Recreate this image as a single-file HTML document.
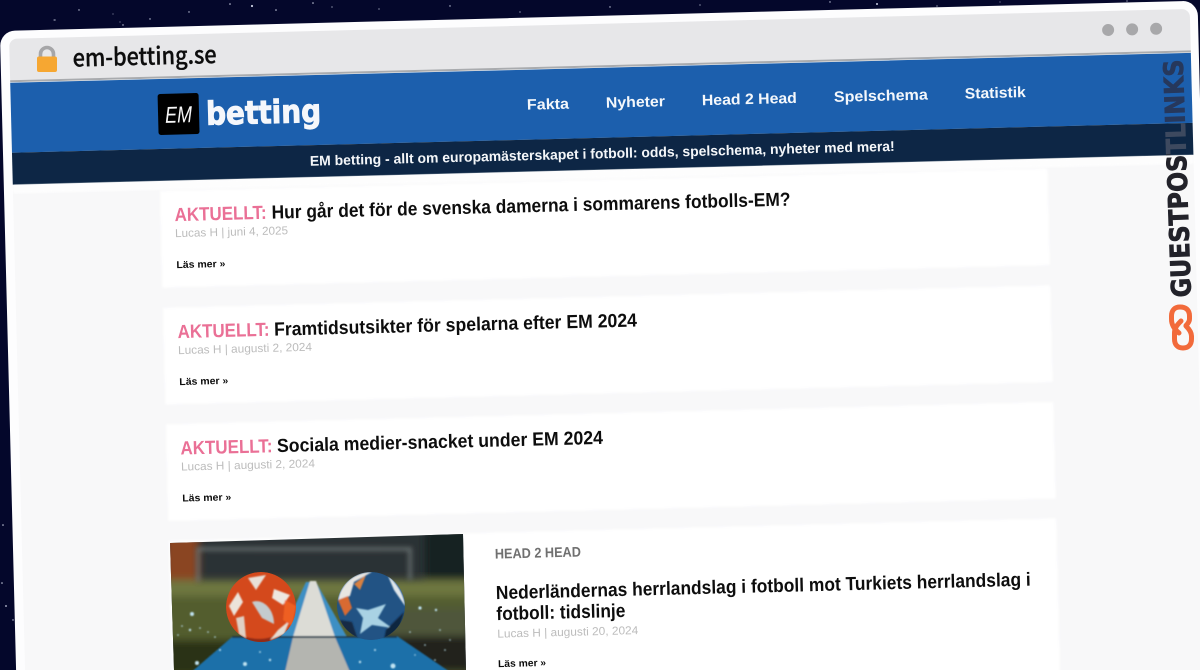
<!DOCTYPE html>
<html lang="sv">
<head>
<meta charset="utf-8">
<title>em-betting.se</title>
<style>
html,body{margin:0;padding:0;background:#04072b;width:1200px;height:670px;overflow:hidden}
svg{display:block}
.p{font-family:"Liberation Sans",sans-serif;font-weight:700}
.n{font-size:15px;fill:#f4f7fb}
.h{font-size:19px;fill:#101010}
.a{font-size:19px;fill:#ea7096}
.m{font-family:"Liberation Sans",sans-serif;font-size:11.5px;fill:#bcbcbc}
.l{font-size:10px;fill:#0a0a0a}
</style>
</head>
<body>
<svg width="1200" height="670" viewBox="0 0 1200 670" xmlns="http://www.w3.org/2000/svg">
<defs>
<filter id="soft" x="-2%" y="-2%" width="104%" height="104%"><feGaussianBlur stdDeviation="0.35"/></filter>
<filter id="b4" x="-20%" y="-20%" width="140%" height="140%"><feGaussianBlur stdDeviation="4"/></filter>
<filter id="b2" x="-20%" y="-20%" width="140%" height="140%"><feGaussianBlur stdDeviation="2.4"/></filter>
<filter id="b1" x="-20%" y="-20%" width="140%" height="140%"><feGaussianBlur stdDeviation="0.8"/></filter>
<filter id="c1" x="-2%" y="-5%" width="104%" height="110%"><feGaussianBlur stdDeviation="1"/></filter>
<clipPath id="imgc"><polygon points="170,543 463,534 466,670 174,670"/></clipPath>
<clipPath id="ball1"><circle cx="261" cy="607" r="35"/></clipPath>
<clipPath id="ball2"><circle cx="371" cy="606" r="34"/></clipPath>
<linearGradient id="gp" gradientUnits="userSpaceOnUse" x1="0" y1="0" x2="238" y2="0">
<stop offset="0" stop-color="#24242c"/><stop offset=".6" stop-color="#24242c"/>
<stop offset=".605" stop-color="#3d4a5f"/><stop offset=".73" stop-color="#3d4a5f"/>
<stop offset=".735" stop-color="#27375c"/><stop offset="1" stop-color="#27375c"/>
</linearGradient>
</defs>

<rect width="1200" height="670" fill="#04072b"/>
<g fill="#c8cde0">
<circle cx="79" cy="10" r=".7"/><circle cx="55" cy="20" r=".6"/><circle cx="123" cy="25" r=".7"/><circle cx="150" cy="19" r=".7"/>
<circle cx="189" cy="12" r=".7"/><circle cx="230" cy="4" r=".8"/><circle cx="252" cy="6" r="1.1"/><circle cx="276" cy="10" r=".8"/>
<circle cx="313" cy="3" r=".8"/><circle cx="332" cy="7" r=".6"/><circle cx="379" cy="9" r=".6"/><circle cx="450" cy="6" r=".7"/>
<circle cx="520" cy="12" r=".6"/><circle cx="610" cy="7" r=".7"/><circle cx="700" cy="5" r=".6"/><circle cx="830" cy="2" r=".7"/>
<circle cx="877" cy="4" r="1"/><circle cx="937" cy="6" r=".6"/><circle cx="1127" cy="1" r=".6"/><circle cx="3" cy="525" r=".8"/>
<circle cx="2" cy="583" r=".8"/><circle cx="6" cy="606" r=".9"/><circle cx="13" cy="620" r=".7"/><circle cx="54" cy="20" r=".5"/>
<circle cx="120" cy="22" r=".5"/><circle cx="113" cy="14" r=".5"/><circle cx="1000" cy="2" r=".5"/>
</g>

<g filter="url(#soft)">
<g transform="translate(0,35) rotate(-1.45)">
<!-- window frame -->
<rect x="0" y="-4" width="1198" height="760" rx="15" fill="#fdfdfe"/>
<path d="M9 48V12a8 8 0 0 1 8-8H1182a8 8 0 0 1 8 8V48Z" fill="#e7e7e9"/>
<rect x="9" y="45.5" width="1181" height="2" fill="#a9abae"/>
<rect x="9" y="47.5" width="1181" height="1" fill="#f5f6f7"/>
<rect x="9" y="48" width="1181" height="710" fill="#f8f8f9"/>
<rect x="9" y="48" width="1181" height="70" fill="#1a5fad"/>
<rect x="9" y="118" width="1181" height="32" fill="#0c2745"/>
<rect x="9" y="150" width="1181" height="9" fill="#ffffff" opacity=".75" filter="url(#c1)"/>

<!-- chrome -->
<circle cx="1107.9" cy="23" r="6" fill="#a8a8aa"/>
<circle cx="1131.9" cy="23" r="6" fill="#a8a8aa"/>
<circle cx="1155.9" cy="23" r="6" fill="#a8a8aa"/>
<text x="72" y="33.5" textLength="144" lengthAdjust="spacingAndGlyphs" font-family="'Noto Sans CJK JP','Liberation Sans',sans-serif" font-weight="500" font-size="24" fill="#0b0b0b" stroke="#0b0b0b" stroke-width=".3">em-betting.se</text>

<!-- header -->
<rect x="156" y="63" width="41" height="41" rx="2.5" fill="#030303"/>
<text x="163" y="92" textLength="27" lengthAdjust="spacingAndGlyphs" font-family="'Liberation Sans',sans-serif" font-style="italic" font-size="23" fill="#f7f7f7">EM</text>
<text x="204" y="95" textLength="115" lengthAdjust="spacingAndGlyphs" font-family="'DejaVu Sans',sans-serif" font-weight="700" font-size="32" fill="#f5f7fb" stroke="#f5f7fb" stroke-width="1">betting</text>

<g class="p">
<text class="n" x="525" y="88" textLength="42" lengthAdjust="spacingAndGlyphs">Fakta</text>
<text class="n" x="604" y="88" textLength="59" lengthAdjust="spacingAndGlyphs">Nyheter</text>
<text class="n" x="700" y="88" textLength="95" lengthAdjust="spacingAndGlyphs">Head 2 Head</text>
<text class="n" x="832" y="88" textLength="94" lengthAdjust="spacingAndGlyphs">Spelschema</text>
<text class="n" x="963" y="88" textLength="61" lengthAdjust="spacingAndGlyphs">Statistik</text>
<text x="306.6" y="138.5" font-size="14" fill="#f4f6f9" textLength="585" lengthAdjust="spacingAndGlyphs">EM betting - allt om europamästerskapet i fotboll: odds, spelschema, nyheter med mera!</text>
</g>

<!-- cards -->
<g filter="url(#c1)">
<rect x="156" y="160" width="887.5" height="96.5" fill="#fff"/>
<rect x="156" y="277" width="887.5" height="96.5" fill="#fff"/>
<rect x="156" y="393.5" width="887.5" height="96.5" fill="#fff"/>
<rect x="156" y="510" width="887.5" height="260" fill="#fff"/>
</g>

<g class="p">
<text class="a" x="170" y="190.5" textLength="92" lengthAdjust="spacingAndGlyphs">AKTUELLT:</text>
<text class="h" x="267" y="190.5" textLength="519" lengthAdjust="spacingAndGlyphs">Hur går det för de svenska damerna i sommarens fotbolls-EM?</text>
<text class="l" x="170.5" y="237.5" textLength="49" lengthAdjust="spacingAndGlyphs">Läs mer »</text>

<text class="a" x="170" y="307.5" textLength="92" lengthAdjust="spacingAndGlyphs">AKTUELLT:</text>
<text class="h" x="266.5" y="307.5" textLength="363" lengthAdjust="spacingAndGlyphs">Framtidsutsikter för spelarna efter EM 2024</text>
<text class="l" x="170.5" y="354.5" textLength="49" lengthAdjust="spacingAndGlyphs">Läs mer »</text>

<text class="a" x="170" y="424" textLength="92" lengthAdjust="spacingAndGlyphs">AKTUELLT:</text>
<text class="h" x="266.5" y="424" textLength="326" lengthAdjust="spacingAndGlyphs">Sociala medier-snacket under EM 2024</text>
<text class="l" x="170.5" y="471" textLength="49" lengthAdjust="spacingAndGlyphs">Läs mer »</text>

<text x="481.6" y="536" font-size="14" fill="#6f6f6f" textLength="86" lengthAdjust="spacingAndGlyphs">HEAD 2 HEAD</text>
<text class="h" x="481.6" y="576.5" textLength="535" lengthAdjust="spacingAndGlyphs">Nederländernas herrlandslag i fotboll mot Turkiets herrlandslag i</text>
<text class="h" x="481.6" y="597.5" textLength="129" lengthAdjust="spacingAndGlyphs">fotboll: tidslinje</text>
<text class="l" x="482" y="644.5" textLength="48" lengthAdjust="spacingAndGlyphs">Läs mer »</text>
</g>
<text class="m" x="170" y="206.5" textLength="113" lengthAdjust="spacingAndGlyphs">Lucas H | juni 4, 2025</text>
<text class="m" x="170" y="323.5" textLength="134" lengthAdjust="spacingAndGlyphs">Lucas H | augusti 2, 2024</text>
<text class="m" x="170" y="440" textLength="134" lengthAdjust="spacingAndGlyphs">Lucas H | augusti 2, 2024</text>
<text class="m" x="482" y="615" textLength="141" lengthAdjust="spacingAndGlyphs">Lucas H | augusti 20, 2024</text>
</g>

<!-- lock -->
<path d="M40.5 58V54a6.5 6.5 0 0 1 13 0V58" fill="none" stroke="#a6a6a8" stroke-width="3.6"/>
<rect x="37" y="56.5" width="20" height="15.5" rx="2" fill="#f6a730"/>

<!-- image -->
<g clip-path="url(#imgc)">
<rect x="165" y="530" width="305" height="145" fill="#2c3235"/>
<g filter="url(#b4)">
<rect x="165" y="530" width="34" height="50" fill="#8a4424"/>
<rect x="425" y="530" width="45" height="50" fill="#182022"/>
<rect x="165" y="582" width="305" height="95" fill="#535d2e"/>
<rect x="165" y="580" width="305" height="16" fill="#6e773f"/>
<rect x="165" y="640" width="100" height="35" fill="#2a3319"/>
<rect x="380" y="608" width="90" height="28" fill="#50563a"/>
<rect x="380" y="636" width="90" height="36" fill="#20231d"/>
</g>
<g filter="url(#b2)" fill="none" stroke="#6c7474" stroke-width="4" opacity=".8">
<path d="M198 582V549H410V580"/>
</g>
<g filter="url(#b1)">
<polygon points="306,582 316,582 347,637 280,637" fill="#3d8fc4"/>
<polygon points="232,637 397,636 450,672 188,675" fill="#1c6fa9"/>
<polygon points="310,581 316,581 335,637 293,637" fill="#dcdcd6"/>
<polygon points="293,637 335,637 350,672 285,672" fill="#b4b5b0"/>
<path d="M232 637H397" stroke="#21394a" stroke-width="1.8"/>
</g>
<g fill="#bfe3f2" filter="url(#b1)">
<circle cx="245" cy="664" r="2"/><circle cx="197" cy="663" r="2"/><circle cx="393" cy="666" r="2.5"/><circle cx="270" cy="660" r="1.2"/>
<circle cx="190" cy="630" r="1.2"/><circle cx="215" cy="637" r=".8"/><circle cx="420" cy="608" r="1.6"/><circle cx="436" cy="610" r="1.2"/>
<circle cx="192" cy="614" r="2"/><circle cx="178" cy="635" r=".8"/><circle cx="410" cy="632" r=".8"/><circle cx="440" cy="630" r=".8"/>
<circle cx="200" cy="628" r=".8"/><circle cx="208" cy="632" r=".8"/><circle cx="182" cy="626" r=".8"/><circle cx="425" cy="645" r=".8"/>
<circle cx="445" cy="650" r=".8"/><circle cx="415" cy="655" r=".7"/><circle cx="435" cy="660" r=".8"/><circle cx="450" cy="640" r=".7"/>
<circle cx="220" cy="650" r="1"/><circle cx="260" cy="652" r=".9"/><circle cx="375" cy="650" r="1"/><circle cx="360" cy="662" r="1.2"/>
</g>
<g clip-path="url(#ball1)">
<circle cx="261" cy="607" r="35" fill="#d4491c"/>
<g filter="url(#b1)">
<path d="M226 625C240 640 270 648 296 622V645H226Z" fill="#8f2a14"/>
<path d="M248 578L266 575 256 590Z" fill="#e8e0d8"/>
<path d="M229 606L238 592 243 602 234 616Z" fill="#ece3da"/>
<path d="M252 602C262 598 274 608 274 624L262 618Z" fill="#c4cbce"/>
<path d="M274 589L290 595 283 605 272 598Z" fill="#eee7e0"/>
<path d="M236 618L244 616 246 638 239 634Z" fill="#e0d0c4"/>
<path d="M278 630L290 620 284 634 270 640Z" fill="#e5dcd2"/>
<path d="M285 600L296 606 292 626 283 620Z" fill="#ee5e22"/>
</g>
</g>
<g clip-path="url(#ball2)">
<circle cx="371" cy="606" r="34" fill="#205284"/>
<g filter="url(#b1)">
<path d="M338 600C342 580 358 572 372 572L354 582 350 596Z" fill="#e8e6e2"/>
<path d="M338 600L348 596 352 608 345 616Z" fill="#d86a30"/>
<path d="M354 584L366 575 360 590Z" fill="#d9803f"/>
<path d="M368 610L386 604 378 618 392 628 372 625 360 634 363 618 356 608Z" fill="#a9d2e4"/>
<path d="M388 576C396 582 404 594 405 606L394 590Z" fill="#dfe6ea"/>
<path d="M340 620L352 622 358 640 345 632Z" fill="#152a44"/>
<path d="M386 630L404 612 398 632 384 640Z" fill="#10253f"/>
</g>
</g>
</g>
</g>

<!-- vertical brand -->
<g filter="url(#soft)">
<g transform="translate(1191,297) rotate(-92)">
<text x="0" y="0" textLength="238" lengthAdjust="spacingAndGlyphs" font-family="'DejaVu Sans',sans-serif" font-weight="700" font-size="27" fill="url(#gp)" stroke="url(#gp)" stroke-width=".7">GUESTPOSTLINKS</text>
</g>
<g fill="none" stroke="#f26b3a" stroke-width="5" stroke-linecap="round">
<path d="M1179 333C1174 329 1171.5 325 1171.5 319V316C1171.5 310 1175 307 1180 307C1186 307 1189.5 310 1189.5 316V319C1189.5 321 1188.5 323 1186 325.5"/>
<path d="M1181 321C1177 325 1174.5 328 1174.5 333V339C1174.5 345 1178 348 1183 348C1188 348 1191.5 345 1191.5 339V336C1191.5 332 1189 329 1186 326"/>
</g>
</g>
</svg>
</body>
</html>
